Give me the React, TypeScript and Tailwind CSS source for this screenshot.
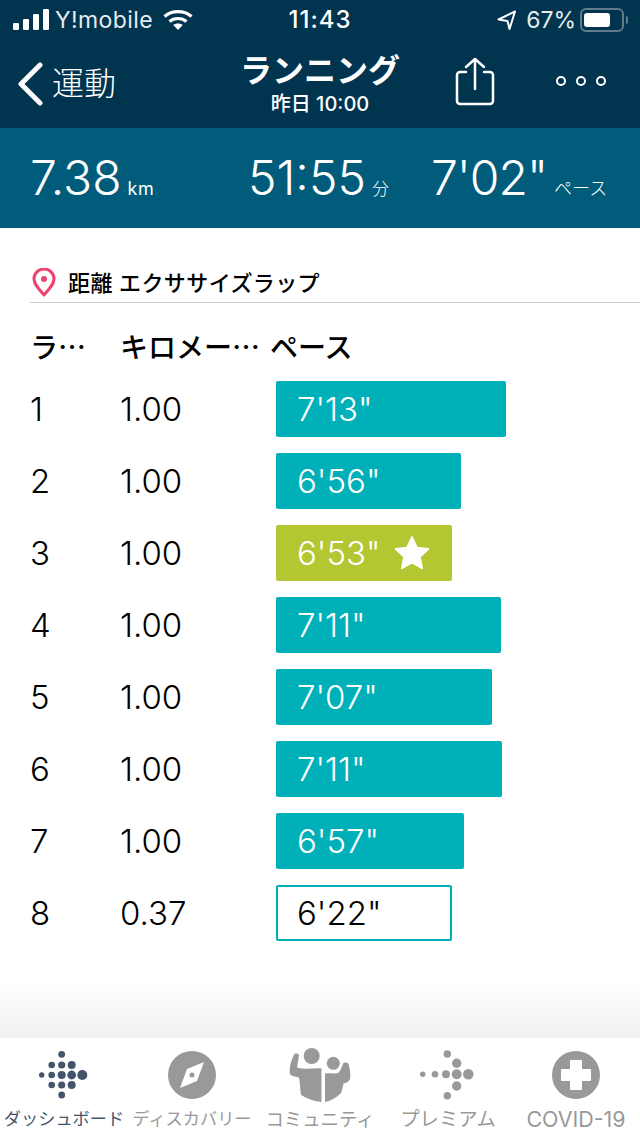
import React from "react";

const rows = [
  { lap: "1", km: "1.00", pace: `7'13"`, w: "w-[230px]" },
  { lap: "2", km: "1.00", pace: `6'56"`, w: "w-[185px]" },
  { lap: "3", km: "1.00", pace: `6'53"`, w: "w-[176px]", best: true },
  { lap: "4", km: "1.00", pace: `7'11"`, w: "w-[225px]" },
  { lap: "5", km: "1.00", pace: `7'07"`, w: "w-[216px]" },
  { lap: "6", km: "1.00", pace: `7'11"`, w: "w-[226px]" },
  { lap: "7", km: "1.00", pace: `6'57"`, w: "w-[188px]" },
  { lap: "8", km: "0.37", pace: `6'22"`, w: "w-[176px]", outline: true },
];

function StatusBar() {
  return (
    <div className="relative flex h-[40px] items-center justify-between pl-[13px] pr-[12px] text-white">
      <div className="flex w-[220px] items-center">
        <svg width="36" height="22" viewBox="0 0 36 22" className="mr-[6px]" fill="#fff">
          <rect x="0" y="14" width="6" height="7" rx="1.2" />
          <rect x="10" y="10" width="6" height="11" rx="1.2" />
          <rect x="20" y="5" width="6" height="16" rx="1.2" />
          <rect x="30" y="0" width="6" height="21" rx="1.2" />
        </svg>
        <span className="text-[23px] leading-none tracking-[0.4px] opacity-90">Y!mobile</span>
        <svg width="30" height="22" viewBox="0 0 30 22" className="ml-[10px]" fill="none" stroke="#fff" strokeWidth="3.2">
          <path d="M1.500 7.500C9 1 21 1 28.500 7.500" />
          <path d="M6.500 12.500C11 8.500 19 8.500 23.500 12.500" />
          <path d="M15 21l-4.800-5c2.800-2 6.800-2 9.600 0z" fill="#fff" stroke="none" />
        </svg>
      </div>
      <span className="absolute left-0 right-0 text-center text-[24px] font-medium leading-none tracking-[1px]">11:43</span>
      <div className="flex items-center">
        <svg width="20" height="22" viewBox="0 0 20 22" fill="none" stroke="#fff" strokeWidth="2" strokeLinejoin="round">
          <path d="M1.500 10.500 18 2.500 12.500 20 10.500 12z" />
        </svg>
        <span className="ml-[9px] text-[23px] leading-none opacity-90">67%</span>
        <div className="ml-[4px] flex h-[24px] w-[44px] items-center rounded-[6px] border-2 border-[#5f7c8e] p-[2px]">
          <div className="h-[14px] w-[26px] rounded-[3px] bg-white" />
        </div>
        <div className="ml-[2px] h-[8px] w-[2px] rounded-r bg-[#5f7c8e]" />
      </div>
    </div>
  );
}

function NavBar() {
  return (
    <div className="relative flex h-[88px] items-start text-white">
      <div className="flex w-[200px] items-center pl-[17px] pt-[22px]">
        <svg width="28" height="44" viewBox="0 0 28 44" fill="none" stroke="#fff" strokeWidth="5" strokeLinecap="round" strokeLinejoin="round">
          <path d="M23 3 4 22l19 19" />
        </svg>
        <span className="ml-[7px] text-[32px] font-light leading-none">運動</span>
      </div>
      <div className="flex w-[240px] flex-col items-center pt-[13px]">
        <span className="text-[32px] font-bold leading-[36px]">ランニング</span>
        <span className="mt-[3px] text-[20px] font-medium leading-[24px]">昨日 10:00</span>
      </div>
      <div className="pl-[15px] pt-[17px]">
        <svg width="40" height="50" viewBox="0 0 40 50" fill="none" stroke="#fff" strokeWidth="2.500" strokeLinecap="round" strokeLinejoin="round">
          <path d="M11 15H5a3 3 0 0 0-3 3v26a3 3 0 0 0 3 3h30a3 3 0 0 0 3-3V18a3 3 0 0 0-3-3h-6" />
          <path d="M20 32V2M11 10l9-8 9 8" />
        </svg>
      </div>
      <div className="flex gap-[10px] pl-[61px] pt-[36px]">
        <div className="size-[10px] rounded-full border-2 border-white" />
        <div className="size-[10px] rounded-full border-2 border-white" />
        <div className="size-[10px] rounded-full border-2 border-white" />
      </div>
    </div>
  );
}

function Stats() {
  return (
    <div className="flex h-[100px] items-center bg-[#005c7a] pl-[30px] font-light text-white">
      <div className="flex w-[218px] items-baseline">
        <span className="text-[48px] leading-none">7.38</span>
        <span className="ml-[6px] text-[18px] font-normal leading-none tracking-[0.5px]">km</span>
      </div>
      <div className="flex w-[183px] items-baseline">
        <span className="text-[48px] leading-none">51:55</span>
        <span className="ml-[6px] text-[17px] leading-none">分</span>
      </div>
      <div className="flex items-baseline">
        <span className="text-[48px] leading-none tracking-[-1px]">7'02"</span>
        <span className="ml-[7px] text-[18px] leading-none">ペース</span>
      </div>
    </div>
  );
}

function Star() {
  return (
    <svg width="40" height="40" viewBox="0 0 24 24" fill="#fff" stroke="#fff" strokeWidth="1.200" strokeLinejoin="round" className="ml-[11px]">
      <path d="m12 2.500 2.900 6.300 6.800.8-5 4.700 1.300 6.800-6-3.400-6 3.400 1.300-6.800-5-4.700 6.800-.8z" />
    </svg>
  );
}

function LapTable() {
  return (
    <div className="flex-1 bg-white">
      <div className="ml-[30px] mt-[40px] flex h-[35px] items-center border-b border-[#cfcfcf] pb-[4px]">
        <svg width="26" height="30" viewBox="0 0 26 30" fill="none" stroke="#f0426f" strokeWidth="3" className="-mt-[1px] ml-[1px]">
          <path d="M13 27C7 20 3 16 3 11a10 10 0 0 1 20 0c0 5-4 9-10 16z" strokeLinejoin="round" />
          <circle cx="13" cy="11" r="3" fill="#f0426f" stroke="none" />
        </svg>
        <span className="ml-[11px] text-[22px] font-medium leading-none tracking-[0.4px] text-black">距離 エクササイズラップ</span>
      </div>
      <div className="mt-[25px] flex h-[36px] items-center pl-[30px] font-['Noto_Sans_CJK_JP',sans-serif] text-[28px] font-medium text-black">
        <span className="w-[90px]">ラ…</span>
        <span className="w-[150px] whitespace-nowrap">キロメー…</span>
        <span>ペース</span>
      </div>
      <div className="mt-[17px] flex flex-col gap-[16px]">
        {rows.map((r) => (
          <div key={r.lap} className="flex h-[56px] items-center pl-[30px] text-[33px] font-light text-black">
            <span className="w-[90px] pt-[2px]">{r.lap}</span>
            <span className="w-[156px] pt-[2px]">{r.km}</span>
            <div
              className={`${r.w} flex h-[56px] items-center rounded-[2px] ${
                r.outline
                  ? "border-2 border-[#00b0b9] pl-[19px] text-black"
                  : r.best
                    ? "bg-[#b4c632] pl-[21px] text-white"
                    : "bg-[#00b0b9] pl-[21px] text-white"
              }`}
            >
              <span className="pt-[2px]">{r.pace}</span>
              {r.best && <Star />}
            </div>
          </div>
        ))}
      </div>
    </div>
  );
}

const dots1: [number, number, number][] = [
  [22.7, 4.3, 3.4], [12.7, 15, 3.3], [22.7, 15, 3.6], [32.7, 15, 4],
  [2.7, 25, 2.7], [12.7, 25, 3.3], [22.7, 25, 4], [32.7, 25, 4.4], [43.3, 25, 5],
  [12.7, 35, 3.3], [22.7, 35, 3.6], [32.7, 35, 4], [22.7, 45, 3.4],
];

const dots2: [number, number, number][] = [
  [30.3, 4, 3.7], [39.7, 13.3, 4.7], [5.7, 24.3, 2.7], [18, 24.3, 3.3], [29, 24.3, 4],
  [39.7, 24.3, 5], [51.3, 24.3, 5.3], [39.7, 36, 4.7], [30.3, 45.7, 3.7],
];

function TabBar() {
  return (
    <div className="relative">
      <div className="absolute -top-[58px] left-0 right-0 h-[58px] bg-gradient-to-b from-white to-[#f1f1f1]" />
      <div className="flex h-[98px] bg-white leading-none text-[#999]">
        <div className="flex w-[128px] flex-col items-center">
          <div className="flex h-[71px] justify-center">
            <svg width="50" height="50" viewBox="0 0 50 50" className="mt-[12px]" fill="#44546a">
              {dots1.map(([x, y, r], i) => (
                <circle key={i} cx={x} cy={y} r={r} />
              ))}
            </svg>
          </div>
          <span className="whitespace-nowrap text-[17.2px] leading-[20px] text-[#44546a]">ダッシュボード</span>
        </div>
        <div className="flex w-[128px] flex-col items-center">
          <div className="flex h-[71px] justify-center">
            <svg width="48" height="48" viewBox="0 0 48 48" className="mt-[13px] -ml-[1px]">
              <circle cx="24" cy="24" r="24" fill="#999" />
              <path d="M36 11 29 30 12 37l7-19z" fill="#fff" strokeLinejoin="round" />
              <circle cx="24" cy="24" r="2.500" fill="#999" />
            </svg>
          </div>
          <span className="whitespace-nowrap text-[17.2px] leading-[20px]">ディスカバリー</span>
        </div>
        <div className="flex w-[128px] flex-col items-center">
          <div className="flex h-[71px] justify-center">
            <svg width="64" height="58" viewBox="8 6 64 58" className="mt-[8px]" fill="#999">
              <circle cx="31.7" cy="16" r="8" />
              <circle cx="53.3" cy="23.3" r="6.500" />
              <path d="M14.500 14c2-1 4-.5 4.500 1.500L17 27.500l4 1c7 .5 14-.5 20.500 0V62c-8.500-1-15.500-4-20.500-7-1-7-1-12-2-17.500-4-1-8-1.500-9-3.500-1-6 1-14 4.500-20z" />
              <path d="M45 33.500c5-.5 10 .5 13-.5 3-2 4-8 5.500-10 2.500-1 4.500 0 5 1 1.500 5 2.500 11 1.500 15-1 3-4 4-6.500 4.500-.5 3.500-1.500 6.500-2.500 9.500-5 5-11 8-16 9z" />
            </svg>
          </div>
          <span className="whitespace-nowrap text-[18.4px] leading-[20px]">コミュニティ</span>
        </div>
        <div className="flex w-[128px] flex-col items-center">
          <div className="flex h-[71px] justify-center">
            <svg width="62" height="50" viewBox="0 0 62 50" className="mt-[12px]" fill="#999">
              {dots2.map(([x, y, r], i) => (
                <circle key={i} cx={x} cy={y} r={r} />
              ))}
            </svg>
          </div>
          <span className="whitespace-nowrap text-[19.4px] leading-[20px]">プレミアム</span>
        </div>
        <div className="flex w-[128px] flex-col items-center">
          <div className="flex h-[71px] justify-center">
            <svg width="48" height="48" viewBox="0 0 48 48" className="mt-[13px]">
              <circle cx="24" cy="24" r="24" fill="#999" />
              <path d="M19 10h10v9h9v10h-9v9H19v-9h-9V19h9z" fill="#fff" stroke="#fff" strokeWidth="2" strokeLinejoin="round" />
            </svg>
          </div>
          <span className="whitespace-nowrap text-[21.4px] leading-[20px]">COVID-19</span>
        </div>
      </div>
    </div>
  );
}

export default function App() {
  return (
    <div className="relative flex h-[1136px] w-[640px] flex-col overflow-hidden bg-white font-['Inter','Noto_Sans_CJK_JP',sans-serif]">
      <div className="bg-[#00344f]">
        <StatusBar />
        <NavBar />
      </div>
      <Stats />
      <LapTable />
      <TabBar />
    </div>
  );
}
